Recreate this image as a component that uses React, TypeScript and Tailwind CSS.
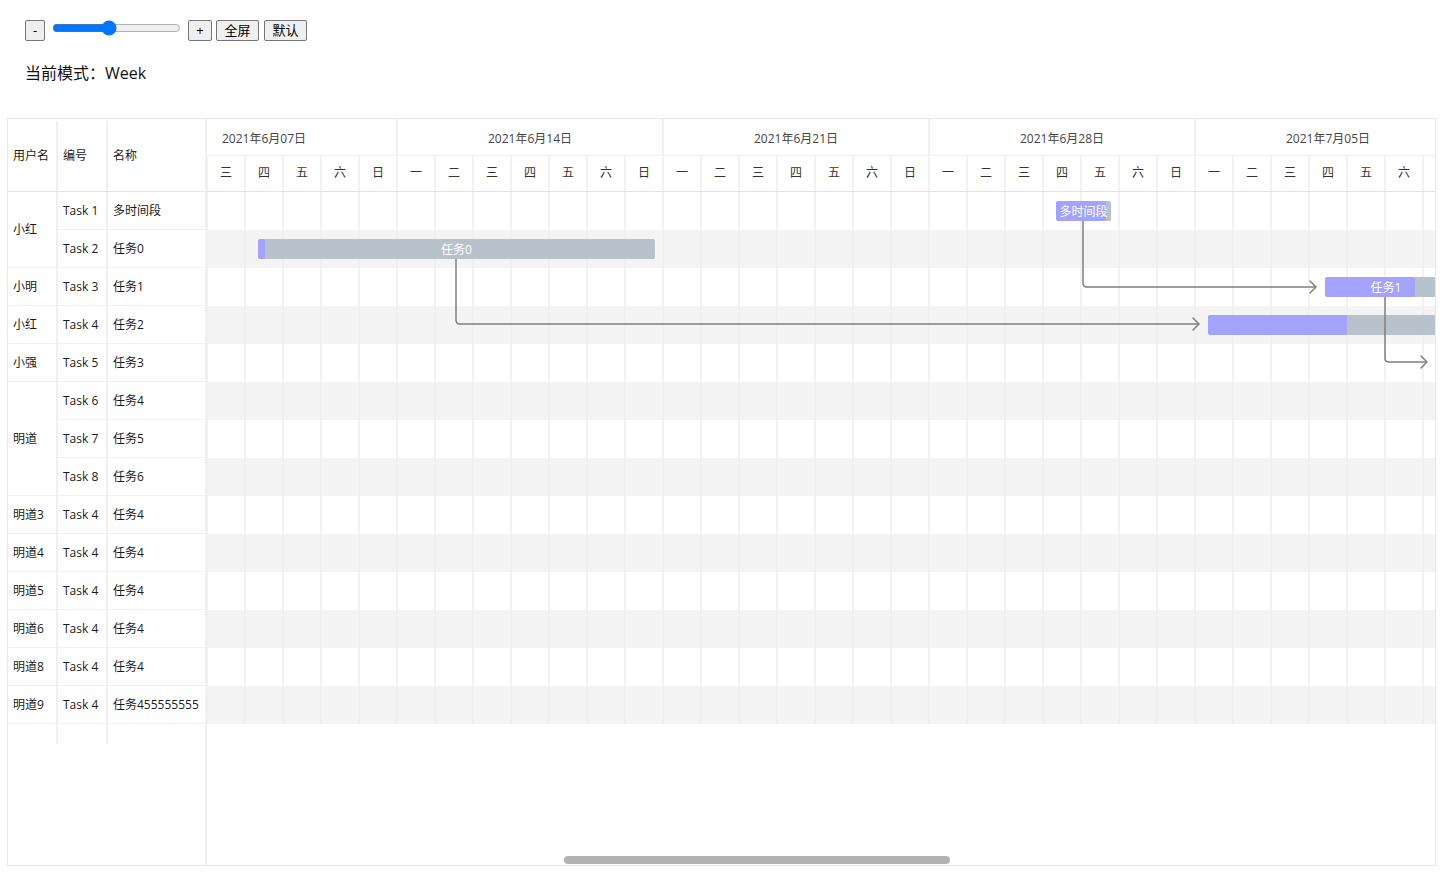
import React from 'react'

const weeks = ['2021年6月07日', '2021年6月14日', '2021年6月21日', '2021年6月28日', '2021年7月05日']
const weekDays = ['一', '二', '三', '四', '五', '六', '日']
const DAY = 38
const ROW = 38
// 视口左侧滚出去的天数 / 右侧只露出一点的那天
const hiddenDays = [0, 1, 34]

const groups = [
  { user: '小红', rows: [['Task 1', '多时间段'], ['Task 2', '任务0']] },
  { user: '小明', rows: [['Task 3', '任务1']] },
  { user: '小红', rows: [['Task 4', '任务2']] },
  { user: '小强', rows: [['Task 5', '任务3']] },
  { user: '明道', rows: [['Task 6', '任务4'], ['Task 7', '任务5'], ['Task 8', '任务6']] },
  { user: '明道3', rows: [['Task 4', '任务4']] },
  { user: '明道4', rows: [['Task 4', '任务4']] },
  { user: '明道5', rows: [['Task 4', '任务4']] },
  { user: '明道6', rows: [['Task 4', '任务4']] },
  { user: '明道8', rows: [['Task 4', '任务4']] },
  { user: '明道9', rows: [['Task 4', '任务455555555']] },
]

const rowCount = groups.reduce((n, g) => n + g.rows.length, 0)

// 时间轴坐标：相对于 6月07日 周一
const bars = [
  { row: 0, left: 925, width: 55, done: 50, label: '多时间段' },
  { row: 1, left: 127, width: 397, done: 7, label: '任务0' },
  { row: 2, left: 1194, width: 122, done: 90, label: '任务1' },
  { row: 3, left: 1077, width: 560, done: 139, label: '' },
]

const links = [
  { d: 'M952 29 V91 Q952 95 956 95 H1185', head: 'M1179 89 L1185 95 L1179 101' },
  { d: 'M325 67 V128 Q325 132 329 132 H1068', head: 'M1062 126 L1068 132 L1062 138' },
  { d: 'M1254 105 V166 Q1254 170 1258 170 H1296', head: 'M1290 164 L1296 170 L1290 176' },
]

function Toolbar() {
  const btn =
    'h-[21px] rounded-[2px] border border-[#767676] bg-[#efefef] text-[13px] leading-none text-black'
  return (
    <div className="pl-[25px] pt-[20px]">
      <div className="flex items-start">
        <button className={`${btn} w-[20px]`}>-</button>
        <input type="range" min={0} max={100} defaultValue={43} className="ml-[7px] h-[16px] w-[129px]" />
        <button className={`${btn} ml-[7px] w-[24px]`}>+</button>
        <button className={`${btn} ml-[4px] w-[43px]`}>全屏</button>
        <button className={`${btn} ml-[5px] w-[43px]`}>默认</button>
      </div>
      <p className="mt-[20px] text-[16px] leading-[24px] text-[#111]">当前模式：Week</p>
    </div>
  )
}

function TablePane() {
  return (
    <div className="flex w-[199px] shrink-0 flex-col border-r-2 border-[#f0f0f0] text-[12px] text-[#1a1a1a]">
      <div className="flex h-[73px] border-b border-[#e3e3e3] pt-[2px]">
        <div className="flex w-[50px] items-center border-r-2 border-[#f0f0f0] pl-[5px]">用户名</div>
        <div className="flex w-[50px] items-center border-r-2 border-[#f0f0f0] pl-[5px]">编号</div>
        <div className="flex flex-1 items-center pl-[5px]">名称</div>
      </div>
      {groups.map((g, gi) => (
        <div key={gi} className="flex">
          <div
            className="flex w-[50px] shrink-0 items-center border-r-2 border-b border-[#f0f0f0] pl-[5px]"
            style={{ height: g.rows.length * ROW }}
          >
            {g.user}
          </div>
          <div className="flex flex-1 flex-col">
            {g.rows.map(([task, name], ri) => (
              <div key={ri} className="flex h-[38px] border-b border-[#f0f0f0]">
                <div className="flex w-[50px] items-center border-r-2 border-[#f0f0f0] pl-[5px]">{task}</div>
                <div className="flex flex-1 items-center whitespace-nowrap pl-[5px]">{name}</div>
              </div>
            ))}
          </div>
        </div>
      ))}
      <div className="flex h-[20px]">
        <div className="w-[50px] border-r-2 border-[#f0f0f0]" />
        <div className="w-[50px] border-r-2 border-[#f0f0f0]" />
      </div>
    </div>
  )
}

function TimelinePane() {
  const totalDays = weeks.length * 7
  return (
    <div className="relative min-w-0 flex-1 overflow-hidden">
      <div className="ml-[-75px] w-[1330px]">
        {/* 周 */}
        <div className="flex h-[37px] border-b border-[#f0f0f0] text-[12px] text-[#444]">
          {weeks.map((w) => (
            <div key={w} className="flex w-[266px] items-center justify-center border-r-2 border-[#f0f0f0] pt-[3px]">
              {w}
            </div>
          ))}
        </div>
        {/* 日 */}
        <div className="flex h-[36px] border-b border-[#e3e3e3] text-[12px] text-[#333]">
          {Array.from({ length: totalDays }).map((_, i) => (
            <div
              key={i}
              className="flex w-[38px] shrink-0 items-center justify-center border-r-2 border-[#f2f2f2] pb-[1px]"
            >
              {hiddenDays.includes(i) ? '' : weekDays[i % 7]}
            </div>
          ))}
        </div>
        {/* 行 */}
        <div className="relative">
          {Array.from({ length: rowCount }).map((_, i) => (
            <div key={i} className={i % 2 === 1 ? 'h-[38px] bg-[#f4f4f4]' : 'h-[38px] bg-white'} />
          ))}
          <div className="pointer-events-none absolute inset-0 flex">
            {Array.from({ length: totalDays }).map((_, i) => (
              <div key={i} className="w-[38px] shrink-0 border-r-2 border-[#efefef]/80" />
            ))}
          </div>
          <div className="pointer-events-none absolute left-[-1px] top-0 h-full w-[1330px]">
            {bars.map((b, i) => (
              <div
                key={i}
                className="absolute flex h-[20px] items-center justify-center overflow-hidden rounded-[2px] bg-[#b8c2cc] pt-[1px]"
                style={{ left: b.left, width: b.width, top: b.row * ROW + 9 }}
              >
                <div className="absolute inset-y-0 left-0 rounded-[2px] bg-[#a3a3fd]" style={{ width: b.done }} />
                <span className="relative whitespace-nowrap text-[12px] leading-none text-white">{b.label}</span>
              </div>
            ))}
            <svg className="absolute left-0 top-0" width={1330} height={rowCount * ROW} fill="none">
              {links.map((l, i) => (
                <g key={i} stroke="#7f7f7f" strokeWidth={1.5}>
                  <path d={l.d} />
                  <path d={l.head} strokeLinecap="round" strokeLinejoin="round" />
                </g>
              ))}
            </svg>
          </div>
        </div>
      </div>
      <div className="absolute bottom-[1px] left-[357px] h-[8px] w-[386px] rounded-full bg-[#b3b3b3]" />
    </div>
  )
}

export default function App() {
  return (
    <div className="min-h-[874px] bg-white [font-family:'Open_Sans','Noto_Sans_CJK_SC',sans-serif]">
      <Toolbar />
      <div className="mx-[7px] mt-[33px] flex h-[748px] w-[1429px] border border-[#e8e8e8]">
        <TablePane />
        <TimelinePane />
      </div>
    </div>
  )
}
